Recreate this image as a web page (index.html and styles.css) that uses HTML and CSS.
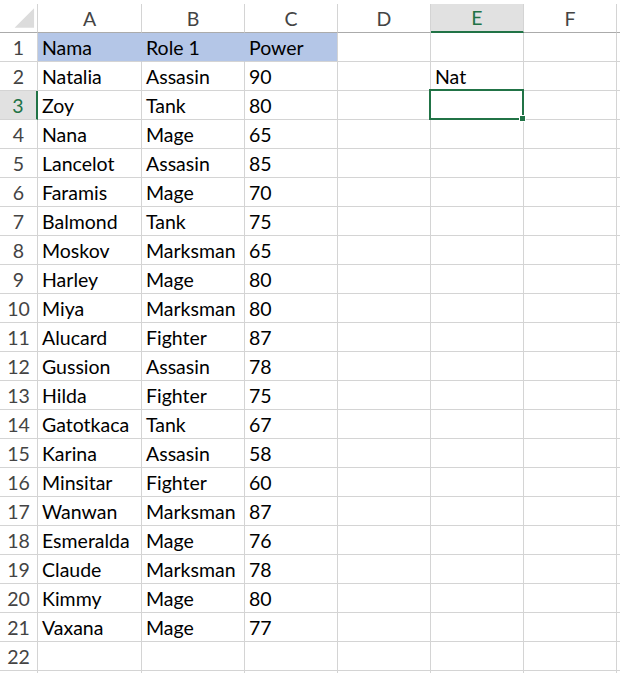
FILE: index.html
```html
<!DOCTYPE html>
<html>
<head>
<meta charset="utf-8">
<link rel="stylesheet" href="styles.css">
</head>
<body>
<div class="sheet">
  <div class="row head">
    <div class="corner"><svg width="38" height="28" viewBox="0 0 38 28"><polygon points="15,24 35,4 35,24" fill="#dcdcdc"/></svg></div>
    <div>A</div><div>B</div><div>C</div><div>D</div><div class="active-col">E</div><div>F</div><div></div>
  </div>
  <div class="row"><div>1</div><div class="fill">Nama</div><div class="fill">Role 1</div><div class="fill last">Power</div><div></div><div></div><div></div><div></div></div>
  <div class="row"><div>2</div><div>Natalia</div><div>Assasin</div><div>90</div><div></div><div>Nat</div><div></div><div></div></div>
  <div class="row"><div class="active-row">3</div><div>Zoy</div><div>Tank</div><div>80</div><div></div><div class="selected"><span class="handle"></span></div><div></div><div></div></div>
  <div class="row"><div>4</div><div>Nana</div><div>Mage</div><div>65</div><div></div><div></div><div></div><div></div></div>
  <div class="row"><div>5</div><div>Lancelot</div><div>Assasin</div><div>85</div><div></div><div></div><div></div><div></div></div>
  <div class="row"><div>6</div><div>Faramis</div><div>Mage</div><div>70</div><div></div><div></div><div></div><div></div></div>
  <div class="row"><div>7</div><div>Balmond</div><div>Tank</div><div>75</div><div></div><div></div><div></div><div></div></div>
  <div class="row"><div>8</div><div>Moskov</div><div>Marksman</div><div>65</div><div></div><div></div><div></div><div></div></div>
  <div class="row"><div>9</div><div>Harley</div><div>Mage</div><div>80</div><div></div><div></div><div></div><div></div></div>
  <div class="row"><div>10</div><div>Miya</div><div>Marksman</div><div>80</div><div></div><div></div><div></div><div></div></div>
  <div class="row"><div>11</div><div>Alucard</div><div>Fighter</div><div>87</div><div></div><div></div><div></div><div></div></div>
  <div class="row"><div>12</div><div>Gussion</div><div>Assasin</div><div>78</div><div></div><div></div><div></div><div></div></div>
  <div class="row"><div>13</div><div>Hilda</div><div>Fighter</div><div>75</div><div></div><div></div><div></div><div></div></div>
  <div class="row"><div>14</div><div>Gatotkaca</div><div>Tank</div><div>67</div><div></div><div></div><div></div><div></div></div>
  <div class="row"><div>15</div><div>Karina</div><div>Assasin</div><div>58</div><div></div><div></div><div></div><div></div></div>
  <div class="row"><div>16</div><div>Minsitar</div><div>Fighter</div><div>60</div><div></div><div></div><div></div><div></div></div>
  <div class="row"><div>17</div><div>Wanwan</div><div>Marksman</div><div>87</div><div></div><div></div><div></div><div></div></div>
  <div class="row"><div>18</div><div>Esmeralda</div><div>Mage</div><div>76</div><div></div><div></div><div></div><div></div></div>
  <div class="row"><div>19</div><div>Claude</div><div>Marksman</div><div>78</div><div></div><div></div><div></div><div></div></div>
  <div class="row"><div>20</div><div>Kimmy</div><div>Mage</div><div>80</div><div></div><div></div><div></div><div></div></div>
  <div class="row"><div>21</div><div>Vaxana</div><div>Mage</div><div>77</div><div></div><div></div><div></div><div></div></div>
  <div class="row"><div>22</div><div></div><div></div><div></div><div></div><div></div><div></div><div></div></div>
  <div class="row"><div></div><div></div><div></div><div></div><div></div><div></div><div></div><div></div></div>
</div>
</body>
</html>
```
FILE: styles.css
```css
html, body {
  margin: 0;
  padding: 0;
  background: #ffffff;
  overflow: hidden;
}
body {
  width: 620px;
  height: 673px;
}
.sheet {
  padding-top: 4px;
  width: 620px;
  overflow: hidden;
  font-family: Lato, "Open Sans", sans-serif;
  font-size: 19.5px;
  color: #000;
}
.row {
  display: flex;
  height: 29px;
}
.row > div {
  flex: none;
  box-sizing: border-box;
  height: 29px;
  border-right: 1px solid #d4d4d4;
  border-bottom: 1px solid #d4d4d4;
  padding: 0 0 2px 4px;
  display: flex;
  align-items: flex-end;
  white-space: nowrap;
  position: relative;
}
.row > :nth-child(1) { width: 38px; }
.row > :nth-child(2) { width: 104px; }
.row > :nth-child(3) { width: 103px; }
.row > :nth-child(4),
.row > :nth-child(5),
.row > :nth-child(6),
.row > :nth-child(7),
.row > :nth-child(8) { width: 93px; }

/* row headers */
.row > :first-child {
  justify-content: center;
  padding: 0 0 2px 0;
  color: #444444;
}
/* column headers */
.head > div {
  justify-content: center;
  align-items: center;
  padding: 0;
  color: #444444;
  border-bottom-color: #ababab;
}
.head > .corner {
  padding: 0;
  align-items: flex-start;
}
.corner svg { display: block; }

.head > .active-col {
  background: #e1e1e1;
  color: #217346;
  border-bottom: 2px solid #217346;
}
.row > .active-row {
  background: #e1e1e1;
  color: #217346;
  border-right: 2px solid #217346;
}

.row > .fill {
  background: #b4c6e7;
  border-right-color: #b4c6e7;
}
.row > .fill.last {
  border-right-color: #d4d4d4;
}

.selected::after {
  content: "";
  position: absolute;
  left: -2px;
  top: -2px;
  right: -1px;
  bottom: -1px;
  border: 2px solid #217346;
}
.handle {
  position: absolute;
  right: -3px;
  bottom: -3px;
  width: 5px;
  height: 5px;
  background: #217346;
  border: 1px solid #ffffff;
  z-index: 2;
}
```
